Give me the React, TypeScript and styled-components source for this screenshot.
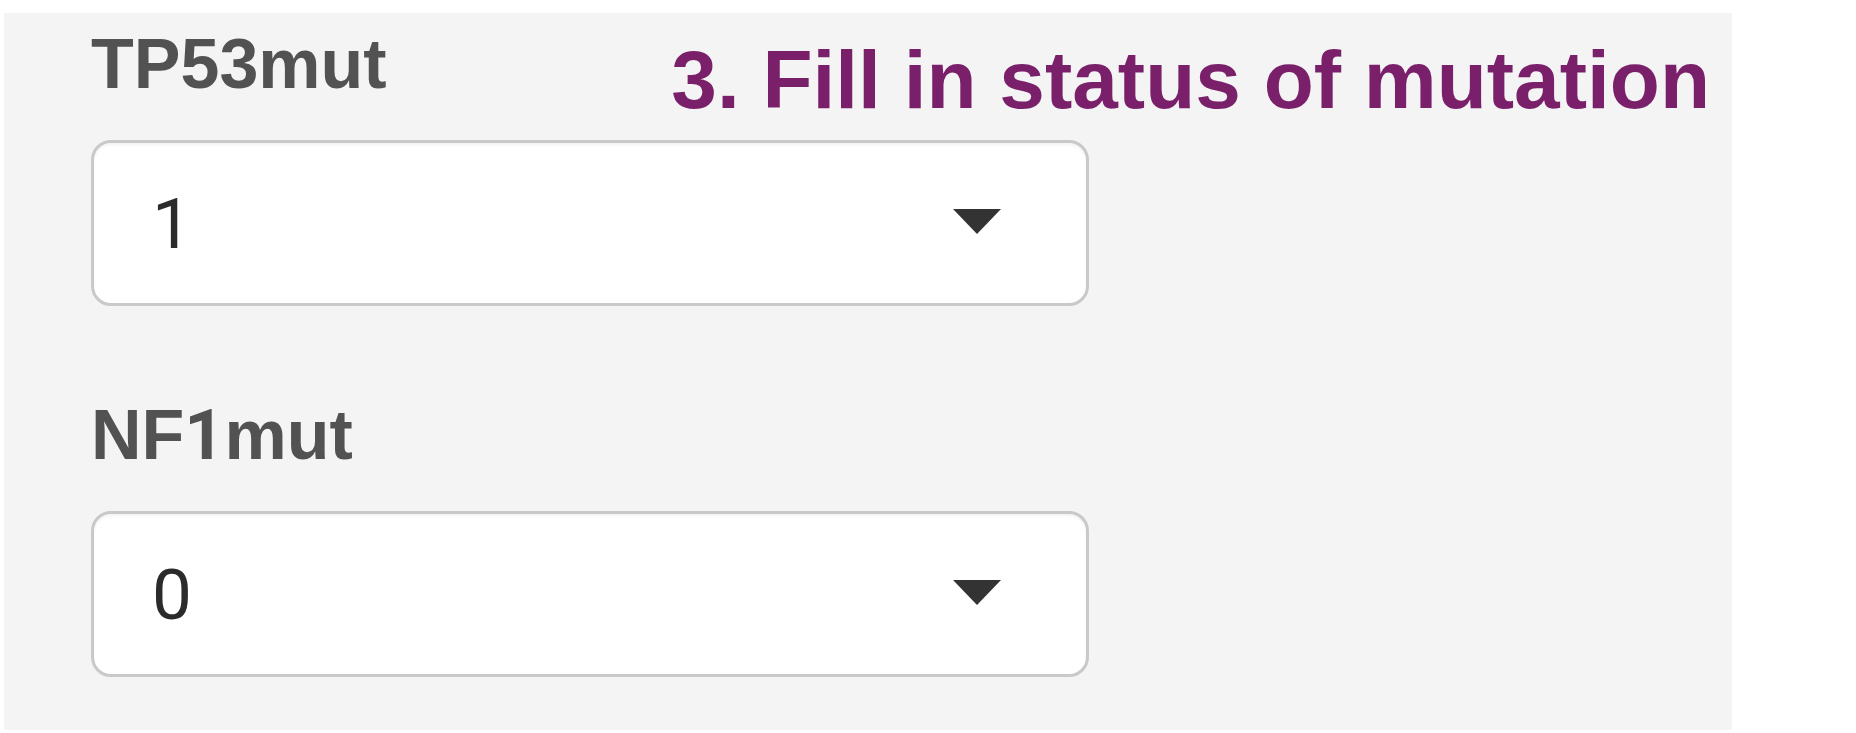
import React from "react";
import styled, { createGlobalStyle } from "styled-components";

const GlobalStyle = createGlobalStyle`
  html, body {
    margin: 0;
    padding: 0;
    background: #ffffff;
  }
  body {
    font-family: "Liberation Sans", Arial, Helvetica, sans-serif;
  }
`;

const Page = styled.div`
  width: 1856px;
  height: 733px;
  padding: 13px 0 0 4px;
  box-sizing: border-box;
`;

const Panel = styled.section`
  width: 1728px;
  height: 717px;
  box-sizing: border-box;
  background: #f4f4f4;
  padding: 1px 22px 0 87px;
  display: flex;
  flex-direction: column;
`;

const FieldGroup = styled.div<{ $gap?: number }>`
  display: flex;
  flex-direction: column;
  margin-top: ${(p) => p.$gap ?? 0}px;
`;

const HeaderRow = styled.div`
  display: flex;
  align-items: flex-start;
  height: 100px;
`;

const Label = styled.label`
  font-family: "Liberation Sans", Arial, Helvetica, sans-serif;
  font-weight: 700;
  font-size: 70px;
  line-height: 100px;
  color: #525252;
  white-space: nowrap;
`;

/* Helvetica-style "1" (flag, no foot) */
const Digit = styled.span`
  font-family: Roboto, "Liberation Sans", Arial, sans-serif;
`;

const Annotation = styled.h2`
  margin: 36px 0 0 auto;
  font-family: "Liberation Sans", Arial, Helvetica, sans-serif;
  font-weight: 700;
  font-size: 82px;
  line-height: 60px;
  color: #7a1f6a;
  white-space: nowrap;
`;

const SelectBox = styled.div`
  margin-top: 26px;
  width: 998px;
  height: 166px;
  box-sizing: border-box;
  background: #ffffff;
  border: 3px solid #c9c9c9;
  border-radius: 20px;
  box-shadow: inset 0 2px 3px rgba(0, 0, 0, 0.05);
  display: flex;
  align-items: center;
  padding: 0 85px 0 58px;
`;

const Value = styled.span`
  flex: 1;
  font-family: Roboto, "Liberation Sans", Arial, sans-serif;
  font-size: 71px;
  line-height: 1;
  color: #2b2b2b;
`;

const Caret = styled.svg`
  display: block;
  width: 48px;
  height: 25px;
  margin-top: -4px;
`;

function Select({ value }: { value: string }) {
  return (
    <SelectBox role="combobox" aria-expanded={false}>
      <Value>{value}</Value>
      <Caret viewBox="0 0 48 25" aria-hidden="true">
        <polygon points="0,0 48,0 24,25" fill="#333333" />
      </Caret>
    </SelectBox>
  );
}

export default function App() {
  return (
    <>
      <GlobalStyle />
      <Page>
        <Panel>
          <FieldGroup>
            <HeaderRow>
              <Label>TP53mut</Label>
              <Annotation>3. Fill in status of mutation</Annotation>
            </HeaderRow>
            <Select value="1" />
          </FieldGroup>
          <FieldGroup $gap={79}>
            <HeaderRow>
              <Label>
                NF<Digit>1</Digit>mut
              </Label>
            </HeaderRow>
            <Select value="0" />
          </FieldGroup>
        </Panel>
      </Page>
    </>
  );
}
